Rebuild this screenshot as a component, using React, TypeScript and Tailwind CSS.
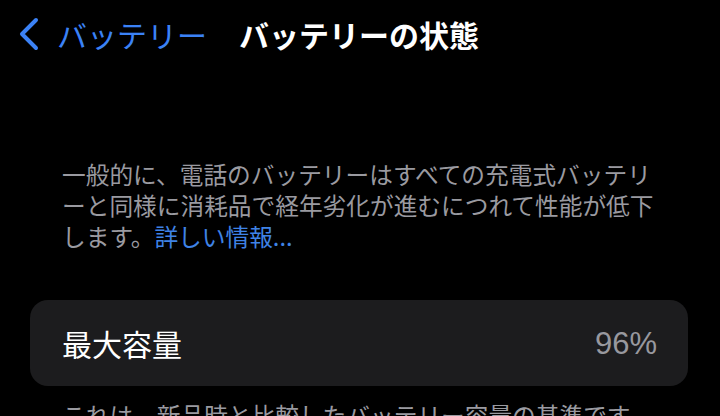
import React from "react";

const font = { fontFamily: '"Noto Sans CJK JP", "Noto Sans", sans-serif' };

export default function App() {
  return (
    <div className="h-[416px] w-[720px] overflow-hidden bg-black" style={font}>
      <div className="flex h-[68px] items-center">
        <div className="flex items-center pl-[18px]">
          <svg width="22" height="34" viewBox="0 0 22 34" fill="none">
            <path d="M18 3 L4 17 L18 31" stroke="#3b82f6" strokeWidth="4" strokeLinecap="round" strokeLinejoin="round" />
          </svg>
          <span className="ml-[17px] text-[30px] leading-none text-[#3b82f6]">バッテリー</span>
        </div>
        <span className="ml-[32px] text-[30px] font-bold leading-none text-white">バッテリーの状態</span>
      </div>

      <div className="mt-[91px] pl-[62px] text-[23.7px] leading-[31px] text-[#9a9aa0]">
        一般的に、電話のバッテリーはすべての充電式バッテリ
        <br />
        ーと同様に消耗品で経年劣化が進むにつれて性能が低下
        <br />
        します。<span className="text-[#3f83e6]">詳しい情報...</span>
      </div>

      <div className="ml-[30px] mt-[48px] flex h-[86px] w-[658px] items-center justify-between rounded-[18px] bg-[#1c1c1e] pl-[32px] pr-[31px]">
        <span className="text-[30px] leading-none text-white">最大容量</span>
        <span className="text-[31px] leading-none text-[#98989e]" style={{ fontFamily: '"Liberation Sans", Arial, sans-serif' }}>
          96%
        </span>
      </div>

      <div className="mt-[14px] pl-[62px] text-[23.7px] leading-[31px] text-[#9a9aa0]">
        これは、新品時と比較したバッテリー容量の基準です。
      </div>
    </div>
  );
}
